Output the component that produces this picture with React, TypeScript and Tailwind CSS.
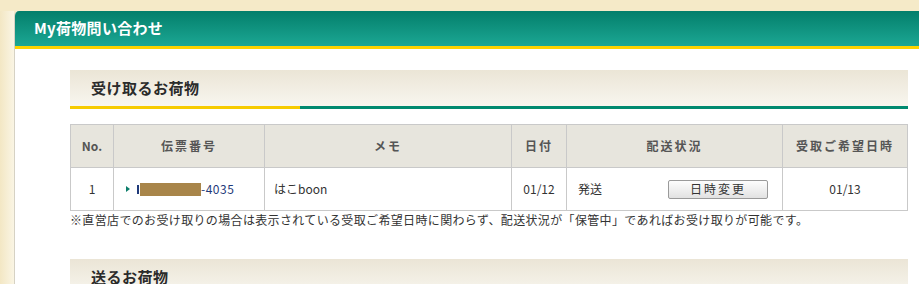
import React from 'react';

const font = { fontFamily: '"MS PGothic", "Noto Sans CJK JP", "Noto Sans", sans-serif' };

function SectionHeader({ title, underline = true }: { title: string; underline?: boolean }) {
  return (
    <div>
      <div className="h-[36px] flex items-center pl-[21px] bg-gradient-to-b from-[#ebe5d6] to-[#f8f6ef]">
        <h2 className="text-[15px] font-bold text-[#2b2b2b] tracking-[0.5px]">{title}</h2>
      </div>
      {underline && (
        <div className="flex h-[3px]">
          <div className="w-[230px] bg-[#f6cb00]" />
          <div className="flex-1 bg-[#008a70]" />
        </div>
      )}
    </div>
  );
}

export default function App() {
  const th = 'border border-[#c9c9c9] bg-[#e7e5dd] text-[12px] font-bold text-[#555] tracking-[2px] text-center';
  const td = 'border border-[#c9c9c9] bg-white text-[12px] text-[#333] h-[43px]';

  return (
    <div className="w-[919px] h-[284px] overflow-hidden bg-[#f5eac8] pt-[11px]" style={font}>
      <div className="flex h-full">
        <div className="w-[14px] shrink-0 bg-gradient-to-r from-[#f3e7c4] to-[#faf5e4]" />
        <div className="flex-1 bg-white rounded-tl-[5px] border-l border-[#d6d2c4] overflow-hidden">
          <div className="h-[35px] flex items-center pl-[19px] bg-gradient-to-b from-[#037f6b] to-[#1ba794]">
            <h1 className="text-[15px] font-bold text-white tracking-[0.3px]">My荷物問い合わせ</h1>
          </div>
          <div className="h-[3px] bg-[#fdd300]" />

          <div className="pl-[55px] pr-[11px] pt-[21px]">
            <SectionHeader title="受け取るお荷物" />

            <table className="mt-[15px] w-[837px] table-fixed border-collapse">
              <colgroup>
                <col className="w-[43px]" />
                <col className="w-[151px]" />
                <col className="w-[247px]" />
                <col className="w-[55px]" />
                <col className="w-[216px]" />
                <col className="w-[125px]" />
              </colgroup>
              <thead>
                <tr className="h-[43px]">
                  <th className={th + ' tracking-normal'}>No.</th>
                  <th className={th}>伝票番号</th>
                  <th className={th}>メモ</th>
                  <th className={th}>日付</th>
                  <th className={th}>配送状況</th>
                  <th className={th + ' tracking-[1px]'}>受取ご希望日時</th>
                </tr>
              </thead>
              <tbody>
                <tr>
                  <td className={td + ' text-center'}>1</td>
                  <td className={td + ' pl-[12px]'}>
                    <div className="flex items-center">
                      <span className="w-0 h-0 border-y-[3px] border-y-transparent border-l-[4px] border-l-[#0b7d6a] mr-[7px]" />
                      <a className="flex items-center text-[#1f3a7a] tracking-[0.5px]">
                        <span className="w-[2px] h-[9px] bg-[#1f3a7a] mr-[1px]" />
                        <span className="w-[61px] h-[13px] bg-[#a8854a]" />
                        <span>-4035</span>
                      </a>
                    </div>
                  </td>
                  <td className={td + ' pl-[9px]'}>はこboon</td>
                  <td className={td + ' text-center'}>01/12</td>
                  <td className={td + ' pl-[11px] pr-[14px]'}>
                    <div className="flex items-center justify-between">
                      <span>発送</span>
                      <button className="w-[100px] h-[19px] rounded-[2px] border border-[#9a9a9a] bg-gradient-to-b from-[#fdfdfd] to-[#e2e2e2] text-[12px] text-[#333] tracking-[2px] leading-none">
                        日時変更
                      </button>
                    </div>
                  </td>
                  <td className={td + ' text-center'}>01/13</td>
                </tr>
              </tbody>
            </table>
            <p className="text-[12px] text-[#333] leading-[16px] tracking-[0.35px] mt-[1px]">
              ※直営店でのお受け取りの場合は表示されている受取ご希望日時に関わらず、配送状況が「保管中」であればお受け取りが可能です。
            </p>

            <div className="mt-[31px]">
              <SectionHeader title="送るお荷物" underline={false} />
            </div>
          </div>
        </div>
      </div>
    </div>
  );
}
